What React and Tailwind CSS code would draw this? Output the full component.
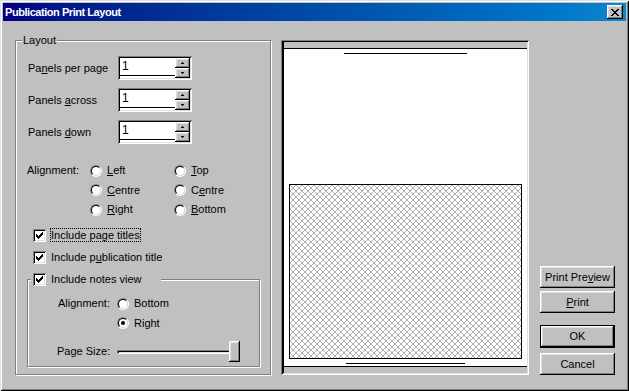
import React from "react";

const raised =
  "shadow-[inset_-1px_-1px_0_#000,inset_1px_1px_0_#fff,inset_-2px_-2px_0_#808080,inset_2px_2px_0_#dfdfdf]";
const sunken =
  "shadow-[inset_1px_1px_0_#808080,inset_-1px_-1px_0_#fff,inset_2px_2px_0_#000,inset_-2px_-2px_0_#dfdfdf]";

function U({ children }) {
  return <span className="underline underline-offset-[1px]">{children}</span>;
}

function SpinBtn({ up }) {
  return (
    <div className={`flex-1 flex items-center justify-center bg-[#c0c0c0] ${raised}`}>
      <svg width="3" height="2" viewBox="0 0 3 2" shapeRendering="crispEdges">
        {up ? (
          <path d="M1 0h1v1H1zM0 1h3v1H0z" fill="#000" />
        ) : (
          <path d="M0 0h3v1H0zM1 1h1v1H1z" fill="#000" />
        )}
      </svg>
    </div>
  );
}

function Spin() {
  return (
    <div className={`flex w-[74px] h-[24px] p-[2px] bg-white ${sunken}`}>
      <div className="flex-1 flex flex-col">
        <div className="h-[17px] pl-[2px] pt-[2px] text-[12px] leading-[13px]">1</div>
        <div className="h-[1px] bg-black" />
        <div className="flex-1" />
      </div>
      <div className="flex flex-col w-[15px]">
        <SpinBtn up />
        <SpinBtn />
      </div>
    </div>
  );
}

function Radio({ checked }) {
  return (
    <div className="w-[12px] h-[12px] rounded-full border border-t-[#808080] border-l-[#808080] border-b-white border-r-white shrink-0">
      <div className="w-full h-full rounded-full border border-t-black border-l-black border-b-[#dfdfdf] border-r-[#dfdfdf] bg-white flex items-center justify-center">
        {checked && <div className="w-[4px] h-[4px] rounded-full bg-black" />}
      </div>
    </div>
  );
}

function Check() {
  return (
    <div className={`w-[13px] h-[13px] bg-white shrink-0 flex items-center justify-center ${sunken}`}>
      <svg width="7" height="7" viewBox="0 0 7 7" shapeRendering="crispEdges">
        <path
          d="M0 2h1v3H0zM1 3h1v3H1zM2 4h1v3H2zM3 3h1v3H3zM4 2h1v3H4zM5 1h1v3H5zM6 0h1v3H6z"
          fill="#000"
        />
      </svg>
    </div>
  );
}

function RadioItem({ checked, children }) {
  return (
    <div className="flex items-center gap-[5px] h-[19.5px]">
      <Radio checked={checked} />
      <span>{children}</span>
    </div>
  );
}

function Button({ children, isDefault }) {
  if (isDefault) {
    return (
      <div className="w-[75px] h-[23px] border border-black">
        <div className={`w-full h-full flex items-center justify-center ${raised}`}>{children}</div>
      </div>
    );
  }
  return (
    <div className={`w-[75px] h-[22px] flex items-center justify-center ${raised}`}>{children}</div>
  );
}

export default function App() {
  return (
    <div
      className={`w-[629px] h-[391px] bg-[#c0c0c0] p-[3px] flex flex-col text-[11px] leading-[13px] text-black font-['Liberation_Sans',Arial,sans-serif] shadow-[inset_1px_1px_0_#dfdfdf,inset_-1px_-1px_0_#000,inset_2px_2px_0_#fff,inset_-2px_-2px_0_#808080]`}
    >
      {/* Title bar */}
      <div className="h-[18px] flex items-center justify-between pl-[2px] pr-[3px] bg-linear-to-r from-[#000080] to-[#1084d0]">
        <span className="text-white font-bold text-[11px] tracking-[-0.45px]">Publication Print Layout</span>
        <div className={`w-[16px] h-[14px] bg-[#c0c0c0] flex items-center justify-center ${raised}`}>
          <svg width="8" height="7" viewBox="0 0 8 7" shapeRendering="crispEdges">
            <path
              d="M0 0h2v1H0zM6 0h2v1H6zM1 1h2v1H1zM5 1h2v1H5zM2 2h4v1H2zM3 3h2v1H3zM2 4h4v1H2zM1 5h2v1H1zM5 5h2v1H5zM0 6h2v1H0zM6 6h2v1H6z"
              fill="#000"
            />
          </svg>
        </div>
      </div>

      {/* Body */}
      <div className="flex pl-[12px] pt-[19px]">
        {/* Layout group */}
        <div className="relative w-[256px] h-[335px] border border-[#808080] shadow-[inset_1px_1px_0_#fff,1px_1px_0_#fff] flex flex-col pl-[12px]">
          <span className="absolute left-[6px] top-[-7px] px-[1px] bg-[#c0c0c0]">Layout</span>

          <div className="flex flex-col gap-[8px] mt-[15px]">
            <div className="flex items-center h-[24px]">
              <span className="w-[90px]">
                Pa<U>n</U>els per page
              </span>
              <Spin />
            </div>
            <div className="flex items-center h-[24px]">
              <span className="w-[90px]">
                Panels <U>a</U>cross
              </span>
              <Spin />
            </div>
            <div className="flex items-center h-[24px]">
              <span className="w-[90px]">
                Panels <U>d</U>own
              </span>
              <Spin />
            </div>
          </div>

          <div className="flex mt-[17px]">
            <div className="w-[62px] h-[19.5px] flex items-center -ml-[1px] pr-[1px] box-content">Alignment:</div>
            <div className="w-[84px] flex flex-col">
              <RadioItem>
                <U>L</U>eft
              </RadioItem>
              <RadioItem>
                <U>C</U>entre
              </RadioItem>
              <RadioItem>
                <U>R</U>ight
              </RadioItem>
            </div>
            <div className="flex flex-col">
              <RadioItem>
                <U>T</U>op
              </RadioItem>
              <RadioItem>
                C<U>e</U>ntre
              </RadioItem>
              <RadioItem>
                <U>B</U>ottom
              </RadioItem>
            </div>
          </div>

          <div className="flex flex-col mt-[4.5px] pl-[5px]">
            <div className="flex items-center h-[22px] gap-[4px]">
              <Check />
              <span className="border border-dotted border-black px-0 leading-[12px]">Include page titles</span>
            </div>
            <div className="flex items-center h-[22px] gap-[5px]">
              <Check />
              <span>
                Include p<U>u</U>blication title
              </span>
            </div>
          </div>

          {/* Notes group */}
          <div className="relative mt-[11px] -ml-[1px] w-[233px] h-[88px] border border-[#808080] shadow-[inset_1px_1px_0_#fff,1px_1px_0_#fff] flex flex-col pt-[14px] pl-[30px]">
            <div className="absolute left-[3px] top-[-7px] w-[130px] pl-[2px] h-[13px] bg-[#c0c0c0] flex items-center gap-[5px]">
              <Check />
              <span>Include notes view</span>
            </div>
            <div className="flex">
              <div className="w-[59px] h-[19.5px] flex items-center">Alignment:</div>
              <div className="flex flex-col">
                <RadioItem>Bottom</RadioItem>
                <RadioItem checked>Right</RadioItem>
              </div>
            </div>
            <div className="flex items-center h-[21px] mt-[8px]">
              <span className="w-[60px] -ml-[1px]">Page Size:</span>
              <div className="relative w-[123px] h-[21px] flex items-center">
                <div className={`w-[114px] h-[4px] ${sunken}`} />
                <div className={`absolute right-0 top-0 w-[11px] h-[21px] bg-[#c0c0c0] ${raised}`} />
              </div>
            </div>
          </div>
        </div>

        {/* Preview */}
        <div className={`ml-[10px] w-[248px] h-[335px] p-[2px] ${sunken}`}>
          <div className="w-full h-full flex flex-col border-l border-black">
            <div className="h-[7px] bg-[#c0c0c0] border-b border-black" />
            <div className="flex-1 bg-white flex flex-col">
              <div className="mt-[4px] ml-[60px] w-[123px] h-[1px] bg-black" />
              <div className="mt-[130px] ml-[5px] w-[233px] h-[175px] border border-black bg-white">
                <svg width="100%" height="100%">
                  <defs>
                    <pattern id="hatch" width="6" height="6" patternUnits="userSpaceOnUse">
                      <path d="M0 0L6 6M6 0L0 6" stroke="#9a9a9a" strokeWidth="0.8" fill="none" />
                    </pattern>
                  </defs>
                  <rect width="100%" height="100%" fill="url(#hatch)" />
                </svg>
              </div>
              <div className="mt-[4px] ml-[62px] w-[119px] h-[1px] bg-black" />
            </div>
            <div className="h-[7px] bg-[#c0c0c0] border-t border-black" />
          </div>
        </div>

        {/* Buttons */}
        <div className="ml-[11px] flex flex-col pt-[226px]">
          <Button>
            Print Pre<U>v</U>iew
          </Button>
          <div className="mt-[3px]">
            <Button>
              <U>P</U>rint
            </Button>
          </div>
          <div className="mt-[12px]">
            <Button isDefault>OK</Button>
          </div>
          <div className="mt-[5px]">
            <Button>Cancel</Button>
          </div>
        </div>
      </div>
    </div>
  );
}
